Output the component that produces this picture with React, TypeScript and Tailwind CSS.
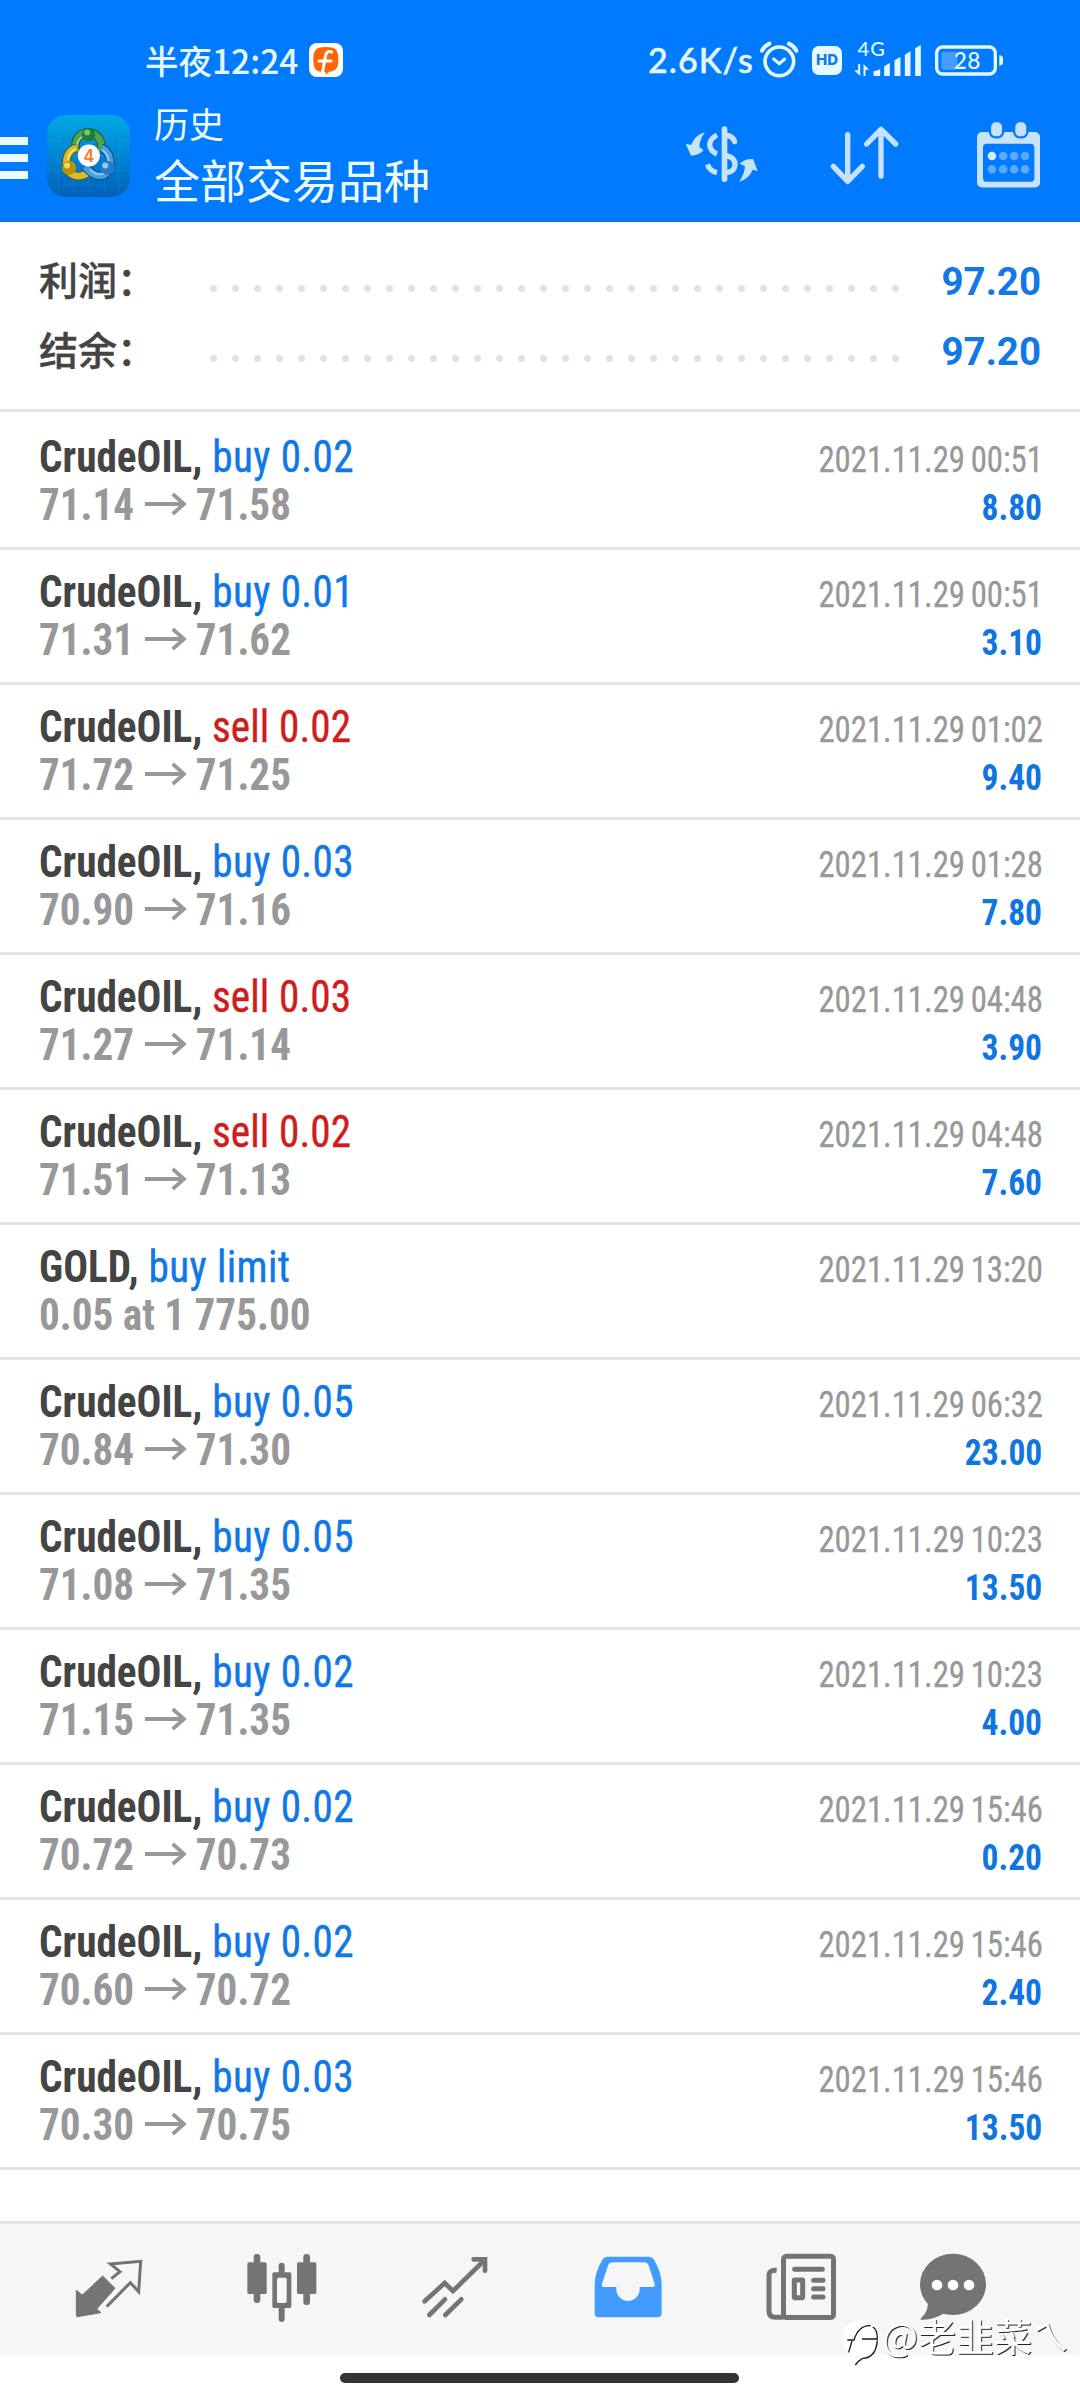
import type { ReactNode } from 'react';

type Deal = {
  symbol: string;
  action: string;
  side: 'buy' | 'sell';
  from?: string;
  to?: string;
  note?: string;
  time: string;
  profit?: string;
};

const DEALS: Deal[] = [
  { symbol: 'CrudeOIL', side: 'buy', action: 'buy 0.02', from: '71.14', to: '71.58', time: '2021.11.29 00:51', profit: '8.80' },
  { symbol: 'CrudeOIL', side: 'buy', action: 'buy 0.01', from: '71.31', to: '71.62', time: '2021.11.29 00:51', profit: '3.10' },
  { symbol: 'CrudeOIL', side: 'sell', action: 'sell 0.02', from: '71.72', to: '71.25', time: '2021.11.29 01:02', profit: '9.40' },
  { symbol: 'CrudeOIL', side: 'buy', action: 'buy 0.03', from: '70.90', to: '71.16', time: '2021.11.29 01:28', profit: '7.80' },
  { symbol: 'CrudeOIL', side: 'sell', action: 'sell 0.03', from: '71.27', to: '71.14', time: '2021.11.29 04:48', profit: '3.90' },
  { symbol: 'CrudeOIL', side: 'sell', action: 'sell 0.02', from: '71.51', to: '71.13', time: '2021.11.29 04:48', profit: '7.60' },
  { symbol: 'GOLD', side: 'buy', action: 'buy limit', note: '0.05 at 1 775.00', time: '2021.11.29 13:20' },
  { symbol: 'CrudeOIL', side: 'buy', action: 'buy 0.05', from: '70.84', to: '71.30', time: '2021.11.29 06:32', profit: '23.00' },
  { symbol: 'CrudeOIL', side: 'buy', action: 'buy 0.05', from: '71.08', to: '71.35', time: '2021.11.29 10:23', profit: '13.50' },
  { symbol: 'CrudeOIL', side: 'buy', action: 'buy 0.02', from: '71.15', to: '71.35', time: '2021.11.29 10:23', profit: '4.00' },
  { symbol: 'CrudeOIL', side: 'buy', action: 'buy 0.02', from: '70.72', to: '70.73', time: '2021.11.29 15:46', profit: '0.20' },
  { symbol: 'CrudeOIL', side: 'buy', action: 'buy 0.02', from: '70.60', to: '70.72', time: '2021.11.29 15:46', profit: '2.40' },
  { symbol: 'CrudeOIL', side: 'buy', action: 'buy 0.03', from: '70.30', to: '70.75', time: '2021.11.29 15:46', profit: '13.50' },
];

const SUMMARY = [
  { label: '利润：', value: '97.20' },
  { label: '结余：', value: '97.20' },
];

const DOTS = Array.from({ length: 32 }, (_, i) => i);

function StatusBar() {
  return (
    <div className="flex h-[95px] items-center pt-[25px] text-[#e6f8ff]">
      <span className="ml-[145px] w-[164px] whitespace-nowrap font-['Noto_Sans_CJK_SC',sans-serif] text-[33.5px] font-medium leading-[40px]">
        半夜12:24
      </span>
      <svg width="34" height="34" viewBox="0 0 102 102">
        <rect width="102" height="102" rx="24" fill="#fff" />
        <path d="M50 12 C80 12 88 20 88 50 C88 76 80 84 60 86 L50 96 V87 C20 87 13 78 13 50 C13 20 22 12 50 12Z" fill="#ff6600" />
        <path d="M68 27 C54 22 50 32 48 46 L39 98 M30 54 H66" stroke="#fff" strokeWidth="9" fill="none" strokeLinecap="round" />
      </svg>
      <span className="ml-[305px] w-[111px] whitespace-nowrap font-['Lato',sans-serif] text-[34px] font-medium leading-[40px] tracking-[1.1px] [-webkit-text-stroke:0.5px]">
        2.6K/s
      </span>
      {/* alarm */}
      <svg className="-mt-[1px]" width="40" height="37" viewBox="0 0 120 111" fill="none" stroke="currentColor" strokeLinecap="round">
        <circle cx="61" cy="61" r="43" strokeWidth="11" />
        <path d="M9 29 Q16 15 31 8 M112 29 Q105 15 90 8" strokeWidth="12" />
        <path d="M44 54 L61 68 L77 54" strokeWidth="9" />
      </svg>
      <span className="ml-[13px] flex h-[29px] w-[30px] items-center justify-center rounded-[7px] bg-[#e6f8ff] font-['Inter',sans-serif] text-[15px] font-extrabold text-[#0f78e8]">
        HD
      </span>
      {/* signal */}
      <svg className="-mt-[13px] ml-[12px]" width="67" height="45" viewBox="0 -30 200 135" fill="currentColor">
        <text x="10" y="46" fontFamily="Lato" fontWeight="500" fontSize="60" textLength="82">4G</text>
        <path d="M12 69 H18 V105 L0 88 H12Z M28 105 V69 L45 86 H34 V105Z" />
        <path d="M58 91 Q70 89 78 84 V105 H58Z M90 76 L107 66 V105 H90Z M121 58 L139 48 V105 H121Z M152 41 L169 31 V105 H152Z M183 22 L200 12 V105 H183Z" />
      </svg>
      {/* battery */}
      <svg className="ml-[14px]" width="69" height="31" viewBox="0 0 207 93">
        <rect x="5" y="6" width="176" height="81" rx="18" fill="none" stroke="currentColor" strokeWidth="10" />
        <rect x="19" y="20" width="48" height="54" rx="8" fill="#449dff" />
        <path d="M193 31 Q204 31 204 42 V52 Q204 62 193 62Z" fill="currentColor" />
        <text x="56" y="73" fontFamily="Lato" fontWeight="500" fontSize="68" textLength="80" fill="currentColor">28</text>
      </svg>
    </div>
  );
}

function AppLogo() {
  return (
    <svg width="83" height="82" viewBox="0 0 248 245">
      <defs>
        <linearGradient id="logoBg" x1="0" y1="0" x2="0" y2="1">
          <stop offset="0" stopColor="#02a8e4" />
          <stop offset="0.5" stopColor="#0084d2" />
          <stop offset="1" stopColor="#0060b8" />
        </linearGradient>
      </defs>
      <rect width="248" height="245" rx="56" fill="url(#logoBg)" />
      <path d="M34 10 V235 M80 4 V241 M126 4 V241 M172 4 V241 M214 10 V235 M4 34 H244 M4 78 H244 M4 122 H244 M4 166 H244 M4 210 H244" stroke="#3cb4e8" strokeOpacity="0.18" strokeWidth="3" />
      <g fill="none">
        <path d="M86 112 C78 60 110 52 124 52 C150 54 170 78 160 112" stroke="#1d5a3c" strokeWidth="26" />
        <path d="M86 112 C78 60 110 52 124 52 C150 54 170 78 160 112" stroke="#4fa34c" strokeWidth="20" />
        <path d="M88 108 C84 70 110 60 124 60" stroke="#a5d890" strokeWidth="5" />
        <path d="M90 98 C60 104 52 136 62 166 C82 190 108 184 122 172" stroke="#5c5a18" strokeWidth="26" />
        <path d="M90 98 C60 104 52 136 62 166 C82 190 108 184 122 172" stroke="#d6bc30" strokeWidth="20" />
        <path d="M84 102 C64 112 60 134 64 150" stroke="#f8ec80" strokeWidth="5" />
        <path d="M162 98 C188 110 194 138 184 166 C166 192 138 184 114 154" stroke="#0b4a86" strokeWidth="26" />
        <path d="M162 98 C188 110 194 138 184 166 C166 192 138 184 114 154" stroke="#4a9fda" strokeWidth="20" />
        <path d="M166 104 C182 116 186 130 184 146 M128 162 C144 180 160 180 172 174" stroke="#9cd2f4" strokeWidth="5" />
      </g>
      <circle cx="124" cy="59" r="20" fill="#1f7d3a" />
      <circle cx="120" cy="52" r="9" fill="#6cc878" />
      <circle cx="66" cy="158" r="21" fill="#b8930c" />
      <circle cx="60" cy="151" r="9" fill="#f0dc58" />
      <circle cx="180" cy="158" r="21" fill="#2a7cc8" />
      <circle cx="174" cy="151" r="9" fill="#8accf4" />
      <circle cx="125" cy="121" r="33" fill="#fff" />
      <text x="125" y="139" textAnchor="middle" fontFamily="Inter" fontWeight="600" fontSize="50" fill="#ee8130">4</text>
    </svg>
  );
}

function Header() {
  return (
    <header className="h-[222px] border-b border-[#0f6ed8] bg-[#007aff]">
      <StatusBar />
      <div className="flex items-start">
        <div className="mt-[42px] flex w-[28px] flex-col gap-[9px]">
          <div className="h-2 bg-[#eafaff]" />
          <div className="h-2 bg-[#eafaff]" />
          <div className="h-2 bg-[#eafaff]" />
        </div>
        <div className="ml-[19px] mt-5">
          <AppLogo />
        </div>
        <div className="ml-[24px] w-[531px] pt-[8px] font-['Noto_Sans_CJK_SC',sans-serif] text-[#effcff]">
          <div className="text-[35px] leading-[40px]">历史</div>
          <div className="mt-[5px] text-[46px] leading-[60px]">全部交易品种</div>
        </div>
        {/* currency exchange */}
        <svg className="mt-[30px]" width="73" height="58" viewBox="0 0 219 174" fill="#c8e2fc">
          <rect x="110" y="4" width="17" height="167" rx="8" />
          <g fill="none" stroke="#c8e2fc" strokeWidth="16">
            <path d="M96 30 Q74 42 74 59 Q75 78 96 87" />
            <path d="M67 118 Q74 137 96 143" />
            <path d="M127 31 Q146 36 149 50" strokeLinecap="round" />
            <path d="M125 92 Q151 98 150 120 Q148 141 125 143" />
          </g>
          <path d="M2 56 L18 60 Q30 30 60 22 Q44 42 43 66 L56 76 Q40 92 18 92Z" />
          <path d="M164 116 Q180 100 204 102 L218 138 L203 134 Q192 162 162 170 Q178 150 180 124Z" />
        </svg>
        {/* sort */}
        <svg className="ml-[72px] mt-[30px]" width="69" height="60" viewBox="0 0 207 180" fill="none" stroke="#c8e2fc" strokeWidth="16" strokeLinecap="round" strokeLinejoin="round">
          <path d="M53 29 V169 M10 124 L53 169 L97 124" />
          <path d="M153 153 V13 M110 57 L153 13 L197 57" />
        </svg>
        {/* calendar */}
        <svg className="ml-[78px] mt-[27px]" width="63" height="66" viewBox="0 0 190 198">
          <rect y="30" width="190" height="167" rx="15" fill="#c8e2fc" />
          <rect x="18" y="65" width="155" height="115" rx="12" fill="#007aff" />
          <rect x="39" y="-3" width="40" height="49" rx="17" fill="#c8e2fc" stroke="#007aff" strokeWidth="7" />
          <rect x="112" y="-3" width="40" height="49" rx="17" fill="#c8e2fc" stroke="#007aff" strokeWidth="7" />
          <g fill="#5aaaf9">
            <circle cx="45" cy="102" r="13" fill="#d4ecff" />
            <circle cx="79" cy="102" r="13" />
            <circle cx="112" cy="102" r="13" />
            <circle cx="145" cy="102" r="13" />
            <circle cx="45" cy="142" r="13" />
            <circle cx="79" cy="142" r="13" />
            <circle cx="112" cy="142" r="13" />
            <circle cx="145" cy="142" r="13" />
          </g>
        </svg>
      </div>
    </header>
  );
}

function Summary() {
  return (
    <section className="border-b-[3px] border-[#e4e4e4] pb-[26px] pl-[39px] pr-[39px] pt-[21px]">
      {SUMMARY.map((row) => (
        <div key={row.label} className="flex h-[70px] items-baseline leading-[70px]">
          <span className="w-[171px] whitespace-nowrap font-['Noto_Sans_CJK_SC',sans-serif] text-[39px] font-medium text-[#444] [-webkit-text-stroke:0.4px]">
            {row.label}
          </span>
          <div className="mt-[21px] flex w-[689px] justify-between self-center">
            {DOTS.map((d) => (
              <span key={d} className="size-[7px] rounded-full bg-[#e2e2e4]" />
            ))}
          </div>
          <span className="ml-auto font-['Roboto',sans-serif] text-[38.5px] font-bold text-[#1278e6]">{row.value}</span>
        </div>
      ))}
    </section>
  );
}

function DealRow({ deal }: { deal: Deal }) {
  return (
    <div className="h-[135px] border-b-[3px] border-[#e4e4e4] pl-[39px] pr-[38px] pt-[18px] font-['Roboto_Condensed','Roboto',sans-serif] leading-[48px]">
      <div className="flex h-[48px] items-baseline justify-between whitespace-pre">
        <div className="origin-left scale-x-[0.937] text-[44px]">
          <span className="font-bold text-[#444]">{deal.symbol},</span>
          <span
            className={`[-webkit-text-stroke:0.4px] ${
              deal.side === 'buy' ? 'tracking-[0.4px] text-[#0f78e6]' : 'tracking-[0.1px] text-[#cf1c1c]'
            }`}
          >
            {' '}
            {deal.action}
          </span>
        </div>
        <div className="-mr-[1px] origin-right scale-x-[0.909] text-[36px] text-[#97989a] [-webkit-text-stroke:0.3px] [word-spacing:-2px]">
          {deal.time}
        </div>
      </div>
      <div className="flex h-[48px] items-baseline justify-between whitespace-pre">
        <div className="flex origin-left scale-x-[0.935] text-[44px] font-bold text-[#98989a]">
          {deal.note ?? (
            <>
              {deal.from}
              <svg className="ml-[11px] mr-[10px] mt-[11px]" width="45" height="24" viewBox="0 0 45 24" fill="none" stroke="currentColor" strokeWidth="4">
                <path d="M0 12 H42" />
                <path d="M30 2 L42 12 L30 22" />
              </svg>
              {deal.to}
            </>
          )}
        </div>
        <div className="origin-right scale-x-[0.93] text-[36px] font-bold text-[#0f76e0]">{deal.profit}</div>
      </div>
    </div>
  );
}

function NavIcon({ children }: { children: ReactNode }) {
  return (
    <svg width="72" height="72" viewBox="0 0 216 216">
      {children}
    </svg>
  );
}

function BottomNav() {
  return (
    <nav className="mt-[51px] flex h-[134px] border-t-[3px] border-[#e4e4e4] bg-[#f6f6f6] pl-[22px] pt-[26px] text-[#747474]">
      <div className="flex w-[173px] justify-center">
        <NavIcon>
          <path d="M10 121 L28 135 L89 78 L126 115 L71 177 L84 188 L14 200 Q10 200 10 196Z" fill="currentColor" stroke="currentColor" strokeWidth="3" strokeLinejoin="round" />
          <path d="M115 86 L141 65 L112 42 L203 34 L197 125 L172 98 L101 170" fill="none" stroke="currentColor" strokeWidth="9" />
        </NavIcon>
      </div>
      <div className="flex w-[173px] justify-center">
        <NavIcon>
          <g fill="currentColor">
            <rect x="23" y="12" width="20" height="147" rx="9" />
            <rect x="4" y="37" width="58" height="95" rx="5" />
            <rect x="98" y="38" width="18" height="178" rx="9" />
            <rect x="79" y="67" width="57" height="107" rx="5" />
            <rect x="172" y="12" width="20" height="153" rx="9" />
            <rect x="153" y="37" width="58" height="95" rx="5" />
          </g>
          <rect x="93" y="83" width="29" height="76" rx="5" fill="#f6f6f6" />
        </NavIcon>
      </div>
      <div className="flex w-[173px] justify-center">
        <NavIcon>
          <g fill="none" stroke="currentColor" strokeWidth="14" strokeLinecap="round">
            <path d="M17 154 L77 99 L102 123 L197 30" />
            <path d="M164 28 H198 V62" />
            <path d="M31 195 L78 148 M79 195 L127 148" />
          </g>
        </NavIcon>
      </div>
      <div className="flex w-[173px] justify-center">
        <NavIcon>
          <path
            fill="#429cff"
            fillRule="evenodd"
            d="M48 20 H168 Q180 20 186 29 Q209 68 209 102 V190 Q209 202 197 202 H20 Q8 202 8 190 V102 Q8 68 31 29 Q37 20 48 20Z M62 37 H156 Q166 37 170 46 L188 102 Q190 111 182 111 H143 V118 A35 35 0 0 1 73 118 V111 H36 Q27 111 30 101 L48 47 Q52 37 62 37Z"
          />
        </NavIcon>
      </div>
      <div className="flex w-[173px] justify-center">
        <NavIcon>
          <g fill="none" stroke="currentColor" strokeWidth="15">
            <rect x="55.5" y="18.5" width="150" height="184" rx="9" />
            <path d="M35 61 Q12 59 12 76 V184 Q12 202 32 202 H55" />
            <rect x="88" y="90" width="25" height="53" rx="1" />
            <path d="M89 58 H172 M146 91 H174 M146 116 H174 M146 141 H174" strokeLinecap="round" />
          </g>
        </NavIcon>
      </div>
      <div className="flex w-[132px] justify-center">
        <NavIcon>
          <ellipse cx="108" cy="103" rx="99" ry="92" fill="currentColor" />
          <path d="M30 145 Q40 182 11 206 Q8 210 18 209 Q52 208 85 188Z" fill="currentColor" />
          <g fill="#fff">
            <circle cx="60" cy="105" r="16" />
            <circle cx="108" cy="105" r="16" />
            <circle cx="156" cy="105" r="16" />
          </g>
        </NavIcon>
      </div>
    </nav>
  );
}

function Watermark() {
  return (
    <div className="absolute left-[842px] top-[2313px] flex items-start">
      <svg width="40" height="54" viewBox="0 0 120 162">
        <circle cx="56" cy="76" r="54" fill="#fff" />
        <path d="M16 81 H36 Q50 36 86 38 M30 84 Q24 104 20 118 M60 78 H106 Q106 48 92 42 M106 82 Q102 134 62 136 Q50 142 40 156" fill="none" stroke="#1c1c1c" strokeWidth="4" />
      </svg>
      <span className="whitespace-nowrap font-['Noto_Sans_CJK_SC','Noto_Sans_CJK_TC',sans-serif] text-[38px] leading-[44px] text-white [text-shadow:1px_1px_0_#222]">
        @老韭菜ㄟ
      </span>
    </div>
  );
}

export default function App() {
  return (
    <div className="relative h-[2400px] w-[1080px] overflow-hidden bg-white">
      <Header />
      <Summary />
      <main className="pt-[3px]">
        {DEALS.map((deal, i) => (
          <DealRow key={i} deal={deal} />
        ))}
      </main>
      <BottomNav />
      <div className="ml-[340px] mt-[18px] h-[10px] w-[399px] rounded-full bg-[#333]" />
      <Watermark />
    </div>
  );
}
